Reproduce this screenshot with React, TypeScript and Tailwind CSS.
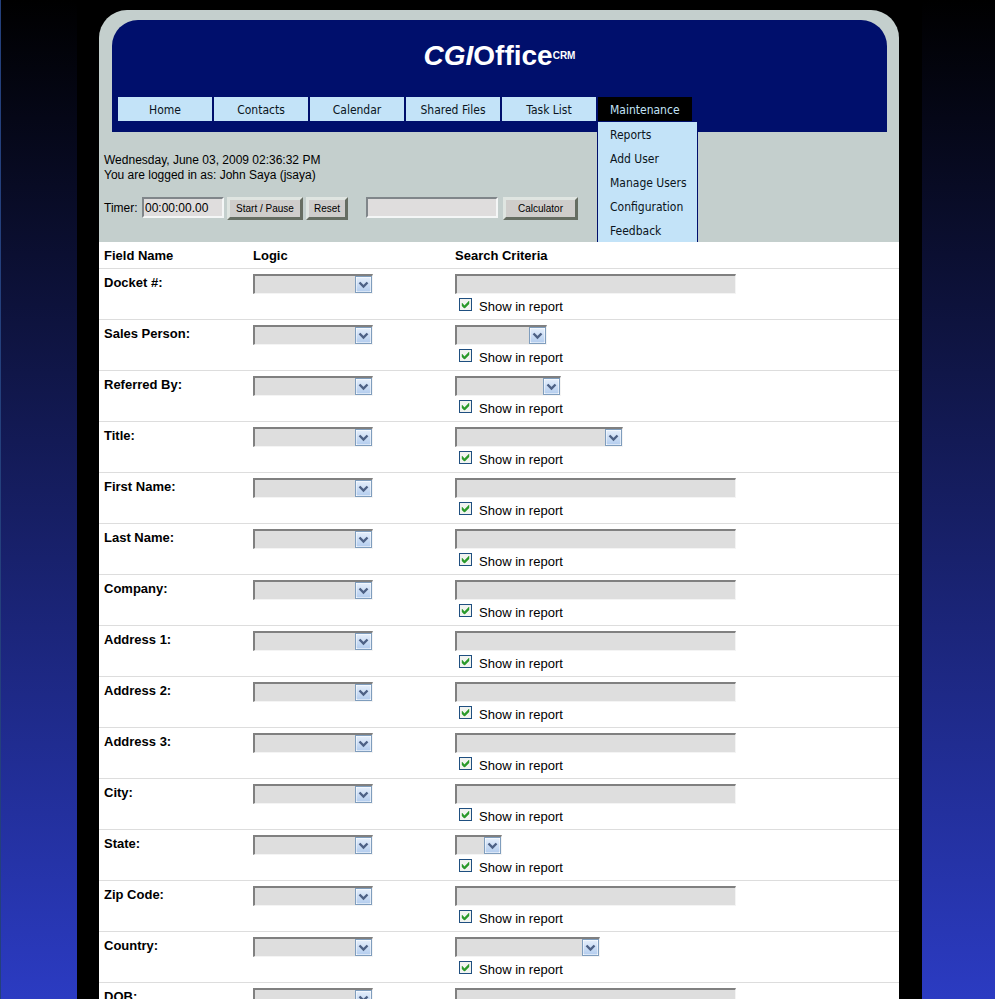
import React from 'react';

const navItems = ['Home', 'Contacts', 'Calendar', 'Shared Files', 'Task List'];

const maintenanceItems = ['Reports', 'Add User', 'Manage Users', 'Configuration', 'Feedback'];

interface Field {
  name: string;
  kind: 'text' | 'select';
  width: string;
}

const fields: Field[] = [
  { name: 'Docket #:', kind: 'text', width: 'w-[281px]' },
  { name: 'Sales Person:', kind: 'select', width: 'w-[92px]' },
  { name: 'Referred By:', kind: 'select', width: 'w-[106px]' },
  { name: 'Title:', kind: 'select', width: 'w-[168px]' },
  { name: 'First Name:', kind: 'text', width: 'w-[281px]' },
  { name: 'Last Name:', kind: 'text', width: 'w-[281px]' },
  { name: 'Company:', kind: 'text', width: 'w-[281px]' },
  { name: 'Address 1:', kind: 'text', width: 'w-[281px]' },
  { name: 'Address 2:', kind: 'text', width: 'w-[281px]' },
  { name: 'Address 3:', kind: 'text', width: 'w-[281px]' },
  { name: 'City:', kind: 'text', width: 'w-[281px]' },
  { name: 'State:', kind: 'select', width: 'w-[47px]' },
  { name: 'Zip Code:', kind: 'text', width: 'w-[281px]' },
  { name: 'Country:', kind: 'select', width: 'w-[145px]' },
  { name: 'DOB:', kind: 'text', width: 'w-[281px]' },
];

const fieldStyle =
  'block h-5 appearance-none rounded-none border-t-2 border-l-2 border-r border-b border-t-[#808080] border-l-[#808080] border-r-[#f4f4f4] border-b-[#f4f4f4] bg-[#dedede] px-1 text-xs outline-none';

const insetStyle =
  'h-[21px] rounded-none border-2 border-t-[#80868a] border-l-[#80868a] border-r-[#f4f6f6] border-b-[#f4f6f6] bg-[#dfdddd] px-px text-xs outline-none';

const cellStyle = 'border-b border-[#dddddd] px-[5px] pt-[5px] pb-[3px]';

function Select({ label, width }: { label: string; width: string }) {
  return (
    <div className={`relative ${width}`}>
      <select aria-label={label} className={`${fieldStyle} w-full`}>
        <option value=""></option>
      </select>
      <svg
        className="pointer-events-none absolute right-px bottom-px"
        width="17"
        height="17"
        viewBox="0 0 17 17"
        aria-hidden="true"
      >
        <defs>
          <linearGradient id="arrowFace" x1="0" y1="0" x2="0" y2="1">
            <stop offset="0" stopColor="#e4eefb" />
            <stop offset="1" stopColor="#b4cdee" />
          </linearGradient>
        </defs>
        <rect x="0.5" y="0.5" width="16" height="16" fill="#fff" stroke="#7f9dbd" />
        <rect x="1.5" y="1.5" width="14" height="14" rx="1" fill="url(#arrowFace)" />
        <path d="M4.5 6.5l4 4 4-4" fill="none" stroke="#4d6185" strokeWidth="2.4" />
      </svg>
    </div>
  );
}

function ShowInReport({ id }: { id: string }) {
  return (
    <div className="mt-1 flex items-start gap-[7px] pl-1">
      <div className="relative">
        <input
          id={id}
          type="checkbox"
          defaultChecked
          className="peer block h-[13px] w-[13px] appearance-none border border-[#1f4f80] bg-[#f1f3f0]"
        />
        <svg
          className="pointer-events-none absolute inset-0 hidden peer-checked:block"
          width="13"
          height="13"
          viewBox="0 0 13 13"
          aria-hidden="true"
        >
          <path d="M3 5v3l2 2h1l4-4V3L5.5 7.5z" fill="#2a9a2a" stroke="#2a9a2a" strokeWidth="0.4" />
        </svg>
      </div>
      <label htmlFor={id}>Show in report</label>
    </div>
  );
}

function ToolButton({ children, width }: { children: React.ReactNode; width: string }) {
  return (
    <button
      type="button"
      className={`h-[23px] border-3 border-t-[#dfe5e1] border-l-[#dfe5e1] border-r-[#666d62] border-b-[#666d62] bg-[#cfcdcb] text-[10px] leading-4 ${width}`}
    >
      {children}
    </button>
  );
}

function Header() {
  return (
    <header className="mr-3 ml-[13px] rounded-t-[26px] bg-[#000f6c] pb-[11px] text-white">
      <h1 className="flex h-[77px] items-start justify-center pt-5 text-[28px] leading-8 font-bold">
        <span>
          <i>CGI</i>Office
        </span>
        <span className="text-[10px]">CRM</span>
      </h1>
      <nav className="flex gap-0.5 pl-1.5 font-['DejaVu_Sans_Condensed','DejaVu_Sans',sans-serif] text-xs text-[#0a1420]">
        {navItems.map((item) => (
          <a key={item} href="#" className="h-6 w-[94px] bg-[#c3e3f8] text-center leading-[26px]">
            {item}
          </a>
        ))}
        <div className="relative w-[94px]">
          <a href="#" className="block h-6 bg-black pl-3 leading-[26px] text-[#c3e3f8]">
            Maintenance
          </a>
          <ul className="absolute top-[25px] -left-px z-10 w-[101px] border-x border-[#000f6c] bg-[#c3e3f8]">
            {maintenanceItems.map((item) => (
              <li key={item}>
                <a href="#" className="block h-6 pl-3 leading-[26px] whitespace-nowrap">
                  {item}
                </a>
              </li>
            ))}
          </ul>
        </div>
      </nav>
    </header>
  );
}

function Toolbar() {
  return (
    <div className="px-[5px] pt-[21px] pb-[22px] text-xs leading-[15px]">
      <p>Wednesday, June 03, 2009 02:36:32 PM</p>
      <p>You are logged in as: John Saya (jsaya)</p>
      <div className="mt-3.5 flex items-start gap-[3px]">
        <label htmlFor="timer" className="w-[35px] leading-[22px]">
          Timer:
        </label>
        <input id="timer" type="text" defaultValue="00:00:00.00" className={`${insetStyle} w-[82px]`} />
        <ToolButton width="w-[76px]">Start / Pause</ToolButton>
        <ToolButton width="w-[42px]">Reset</ToolButton>
        <div className="ml-[15px] flex items-start gap-[5px]">
          <input type="text" aria-label="Calculation" className={`${insetStyle} w-[132px]`} />
          <ToolButton width="w-[75px]">Calculator</ToolButton>
        </div>
      </div>
    </div>
  );
}

function SearchTable() {
  return (
    <table className="w-full table-fixed border-separate border-spacing-0 bg-white text-[13px] leading-[18px]">
      <thead>
        <tr className="text-left">
          <th className={`${cellStyle} w-[149px]`}>Field Name</th>
          <th className={`${cellStyle} w-[202px]`}>Logic</th>
          <th className={cellStyle}>Search Criteria</th>
        </tr>
      </thead>
      <tbody>
        {fields.map((field, index) => (
          <tr key={field.name} className="align-top">
            <th scope="row" className={`${cellStyle} text-left`}>
              {field.name}
            </th>
            <td className={cellStyle}>
              <Select label={`${field.name} logic`} width="w-[120px]" />
            </td>
            <td className={cellStyle}>
              {field.kind === 'text' ? (
                <input type="text" aria-label={field.name} className={`${fieldStyle} ${field.width}`} />
              ) : (
                <Select label={field.name} width={field.width} />
              )}
              <ShowInReport id={`show-${index}`} />
            </td>
          </tr>
        ))}
      </tbody>
    </table>
  );
}

export default function App() {
  return (
    <div className="h-screen overflow-hidden border-l border-[#24407c] bg-linear-to-b/srgb from-black to-[#2b3bc2] pl-[3px] font-['Liberation_Sans',Arial,sans-serif] text-black">
      <div className="mx-auto min-h-full max-w-[845px] bg-black pt-2.5 pr-[23px] pl-[22px]">
        <main className="rounded-t-[28px] bg-[#c4cfcd] pt-2.5">
          <Header />
          <Toolbar />
          <SearchTable />
        </main>
      </div>
    </div>
  );
}
